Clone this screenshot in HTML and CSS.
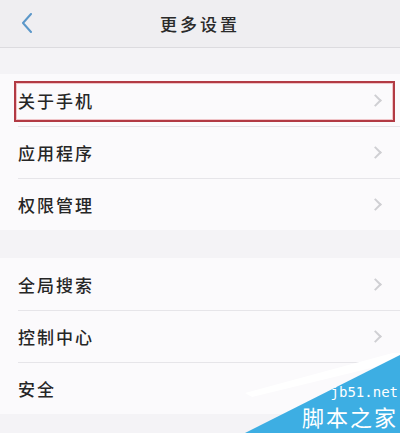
FILE: index.html
```html
<!DOCTYPE html>
<html lang="zh-CN">
<head>
<meta charset="utf-8">
<title>更多设置</title>
<link rel="stylesheet" href="styles.css">
</head>
<body>
<div class="screen">
  <header class="nav">
    <svg class="back" width="12" height="20" viewBox="0 0 12 20"><path d="M10 1 L2 10 L10 19" fill="none" stroke="#5b97c9" stroke-width="2" stroke-linecap="round" stroke-linejoin="round"/></svg>
    <h1 class="title">更多设置</h1>
  </header>

  <ul class="group first">
    <li class="row"><span class="label">关于手机</span><span class="chev"></span><span class="mark"></span></li>
    <li class="row"><span class="label">应用程序</span><span class="chev"></span></li>
    <li class="row"><span class="label">权限管理</span><span class="chev"></span></li>
  </ul>

  <ul class="group">
    <li class="row"><span class="label">全局搜索</span><span class="chev"></span></li>
    <li class="row"><span class="label">控制中心</span><span class="chev"></span></li>
    <li class="row"><span class="label">安全</span><span class="chev"></span></li>
  </ul>

  <div class="stamp">
    <svg class="stamp-bg" width="160" height="80" viewBox="0 0 160 80"><polygon points="5,40 160,-2 160,8 12,44" fill="#ffffff"/><polygon points="5,80 160,2 160,80" fill="#3daee3"/></svg>
    <span class="stamp-url">jb51.net</span>
    <span class="stamp-name">脚本之家</span>
  </div>
</div>
</body>
</html>
```

FILE: styles.css
```css
* { box-sizing: border-box; }

html, body {
  margin: 0;
  padding: 0;
  background: #f4f3f6;
}

.screen {
  position: relative;
  width: 400px;
  height: 433px;
  overflow: hidden;
  font-family: "Noto Sans CJK SC", "Noto Sans", sans-serif;
  color: #222;
}

.nav {
  height: 48px;
  background: #efeef1;
  border-bottom: 1px solid #dcdbdf;
  display: flex;
  align-items: center;
  justify-content: center;
  position: relative;
}

.back {
  position: absolute;
  left: 21px;
  top: 13px;
}

.title {
  margin: 0;
  font-size: 17px;
  font-weight: 500;
  letter-spacing: 3px;
  color: #2a2a2a;
}

.group {
  list-style: none;
  margin: 26px 0 0;
  padding: 0;
  background: #fbfafc;
}

.group + .group {
  margin-top: 28px;
}

.row {
  position: relative;
  height: 52px;
  display: flex;
  align-items: center;
  justify-content: space-between;
  padding: 0 16px 0 18px;
}

.row + .row::before {
  content: "";
  position: absolute;
  left: 18px;
  right: 0;
  top: 0;
  border-top: 1px solid #e6e5e9;
}

.label {
  font-size: 17px;
  font-weight: 500;
  letter-spacing: 2px;
  color: #262626;
}

.chev {
  width: 9px;
  height: 9px;
  border-top: 2px solid #cfcfd3;
  border-right: 2px solid #cfcfd3;
  transform: rotate(45deg);
  margin-right: 4px;
}

/* highlight frame around the first entry */
.mark {
  position: absolute;
  left: 14px;
  right: 5px;
  top: 7px;
  bottom: 4px;
  border: 2px solid #b23a44;
  box-shadow: inset 0 0 0 1px #f0c4c8;
}

.stamp {
  position: absolute;
  right: 0;
  bottom: 0;
  width: 160px;
  height: 80px;
}

.stamp-bg {
  position: absolute;
  left: 0;
  top: 0;
}

.stamp-url {
  position: absolute;
  right: 2px;
  bottom: 34px;
  font-family: "DejaVu Sans Mono", monospace;
  font-size: 14px;
  color: #ffffff;
  line-height: 1;
}

.stamp-name {
  position: absolute;
  right: 2px;
  bottom: 6px;
  font-size: 22px;
  color: #ffffff;
  line-height: 1;
  letter-spacing: 2px;
}
```
